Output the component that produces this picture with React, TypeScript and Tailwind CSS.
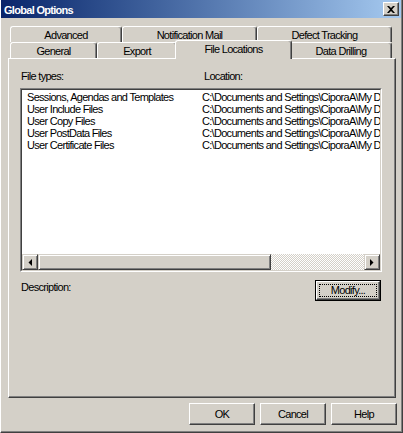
import React from "react";

// Win2000-style "Global Options" dialog

const fileTypes = [
  "Sessions, Agendas and Templates",
  "User Include Files",
  "User Copy Files",
  "User PostData Files",
  "User Certificate Files",
];

const location = "C:\\Documents and Settings\\CiporaA\\My Documents\\Sessions";

const font = { fontFamily: '"Liberation Sans", Arial, sans-serif' };

function Tab({ label, w }: { label: string; w: string }) {
  return (
    <div
      className={`${w} h-[16px] flex items-center justify-center pt-px border-l border-t border-white border-r border-r-[#404040] rounded-t-[3px] shadow-[inset_-1px_0_0_#808080] bg-[#d4d0c8] text-[11px] leading-none text-black`}
    >
      {label}
    </div>
  );
}

function Btn({ label, focus }: { label: string; focus?: boolean }) {
  if (focus) {
    return (
      <div className="w-[66px] h-[21px] border border-black">
        <div className="w-full h-full border-l border-t border-white border-r border-b border-r-[#404040] border-b-[#404040] shadow-[inset_-1px_-1px_0_#808080] p-[2px]">
          <div className="w-full h-full border border-dotted border-black flex items-center justify-center text-[11px] leading-none">
            {label}
          </div>
        </div>
      </div>
    );
  }
  return (
    <div className="w-[66px] h-[22px] border-l border-t border-white border-r border-b border-r-[#404040] border-b-[#404040] shadow-[inset_-1px_-1px_0_#808080] flex items-center justify-center text-[11px] leading-none">
      {label}
    </div>
  );
}

function Arrow({ dir }: { dir: "left" | "right" }) {
  return (
    <div className="w-[16px] h-[16px] shrink-0 bg-[#d4d0c8] border-l border-t border-[#d4d0c8] border-r border-b border-r-[#404040] border-b-[#404040] shadow-[inset_1px_1px_0_#fff,inset_-1px_-1px_0_#808080] flex items-center justify-center">
      <svg width="4" height="7" viewBox="0 0 4 7">
        {dir === "left" ? (
          <polygon points="4,0 4,7 0.5,3.5" fill="#000" />
        ) : (
          <polygon points="0,0 0,7 3.5,3.5" fill="#000" />
        )}
      </svg>
    </div>
  );
}

export default function App() {
  return (
    <div
      className="w-[403px] h-[433px] bg-[#d4d0c8] border-l border-white border-r border-b border-r-[#404040] border-b-[#404040] shadow-[inset_-1px_-1px_0_#808080] flex flex-col text-black tracking-[-0.7px]"
      style={font}
    >
      {/* Title bar */}
      <div className="h-[18px] mr-px flex items-center justify-between bg-gradient-to-r from-[#0a246a] to-[#a6caf0] pl-[3px] pr-[2px]">
        <span className="text-white text-[11px] font-bold leading-none pt-[2px]">Global Options</span>
        <div className="w-[16px] h-[14px] bg-[#d4d0c8] border-l border-t border-white border-r border-b border-r-[#404040] border-b-[#404040] shadow-[inset_-1px_-1px_0_#808080] flex items-center justify-center">
          <svg width="8" height="7" viewBox="0 0 8 7">
            <path d="M0 0 L2 0 L4 2 L6 0 L8 0 L5 3.5 L8 7 L6 7 L4 5 L2 7 L0 7 L3 3.5 Z" fill="#000" />
          </svg>
        </div>
      </div>

      {/* Tabs */}
      <div className="mt-[8px] ml-[9px] flex">
        <Tab label="Advanced" w="w-[112px]" />
        <Tab label="Notification Mail" w="w-[135px]" />
        <Tab label="Defect Tracking" w="w-[135px]" />
      </div>
      <div className="ml-[9px] flex items-end h-[16px]">
        <Tab label="General" w="w-[87px]" />
        <Tab label="Export" w="w-[80px]" />
        <div className="relative z-10 -mx-[2px] -mb-px w-[117px] h-[19px] flex items-start justify-center pt-[3px] border-l border-t border-white border-r border-r-[#404040] rounded-t-[3px] shadow-[inset_-1px_0_0_#808080] bg-[#d4d0c8] text-[11px] leading-none">
          File Locations
        </div>
        <Tab label="Data Drilling" w="w-[102px]" />
      </div>

      {/* Panel */}
      <div className="ml-[7px] w-[388px] h-[340px] border-l border-t border-white border-r border-b border-r-[#404040] border-b-[#404040] shadow-[inset_-1px_-1px_0_#808080] flex flex-col">
        <div className="mt-[11px] pl-[12px] flex text-[11px] leading-[13px]">
          <span className="w-[183px]">File types:</span>
          <span>Location:</span>
        </div>

        {/* List box */}
        <div className="mt-[5px] ml-[11px] w-[362px] h-[184px] border-l border-t border-[#808080] border-r border-b border-r-white border-b-white">
          <div className="w-full h-full border-l border-t border-[#404040] border-r border-b border-r-[#d4d0c8] border-b-[#d4d0c8] bg-white flex flex-col">
            <div className="flex-1 overflow-hidden pt-px">
              {fileTypes.map((t) => (
                <div key={t} className="flex h-[12px] text-[11px] leading-[12px] whitespace-nowrap">
                  <span className="w-[180px] shrink-0 pl-[5px]">{t}</span>
                  <span>{location}</span>
                </div>
              ))}
            </div>
            {/* Horizontal scrollbar */}
            <div className="h-[16px] flex">
              <Arrow dir="left" />
              <div className="w-[233px] h-[16px] shrink-0 bg-[#d4d0c8] border-l border-t border-[#d4d0c8] border-r border-b border-r-[#404040] border-b-[#404040] shadow-[inset_1px_1px_0_#fff,inset_-1px_-1px_0_#808080]" />
              <div className="flex-1 bg-[repeating-conic-gradient(#ffffff_0_25%,#d4d0c8_0_50%)] bg-[length:2px_2px]" />
              <Arrow dir="right" />
            </div>
          </div>
        </div>

        <div className="mt-[8px] pl-[12px] flex items-start justify-between pr-[14px]">
          <span className="text-[11px] leading-[13px] mt-[1px]">Description:</span>
          <Btn label="Modify..." focus />
        </div>
      </div>

      {/* Bottom buttons */}
      <div className="mt-[5px] mr-[5px] flex justify-end gap-[5px]">
        <Btn label="OK" />
        <Btn label="Cancel" />
        <Btn label="Help" />
      </div>
    </div>
  );
}
